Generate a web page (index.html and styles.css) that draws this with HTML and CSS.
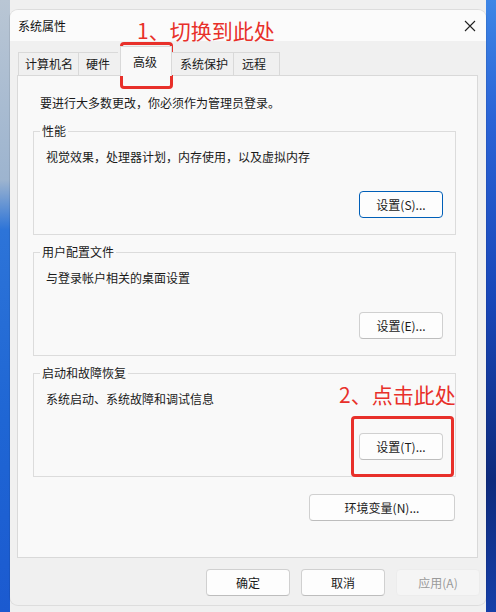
FILE: index.html
```html
<!DOCTYPE html>
<html lang="zh-CN">
<head>
<meta charset="utf-8">
<title>系统属性</title>
<link rel="stylesheet" href="styles.css">
</head>
<body>
<div class="window">
  <div class="titlebar">
    <span class="title">系统属性</span>
    <span class="close">
      <svg width="12" height="12" viewBox="0 0 12 12"><path d="M1 1L11 11M11 1L1 11" stroke="#222" stroke-width="1.1" fill="none"/></svg>
    </span>
  </div>
  <div class="tabs">
    <div class="tab t1">计算机名</div>
    <div class="tab t2">硬件</div>
    <div class="tab t3 active">高级</div>
    <div class="tab t4">系统保护</div>
    <div class="tab t5">远程</div>
  </div>
  <div class="panel">
    <p class="intro">要进行大多数更改，你必须作为管理员登录。</p>
    <div class="group">
      <span class="label">性能</span>
      <p class="desc">视觉效果，处理器计划，内存使用，以及虚拟内存</p>
      <div class="row"><button class="btn default">设置(S)...</button></div>
    </div>
    <div class="group">
      <span class="label">用户配置文件</span>
      <p class="desc">与登录帐户相关的桌面设置</p>
      <div class="row"><button class="btn">设置(E)...</button></div>
    </div>
    <div class="group">
      <span class="label">启动和故障恢复</span>
      <p class="desc">系统启动、系统故障和调试信息</p>
      <div class="row"><button class="btn">设置(T)...</button></div>
    </div>
    <div class="env-row"><button class="btn env">环境变量(N)...</button></div>
  </div>
  <div class="footer">
    <button class="btn foot">确定</button>
    <button class="btn foot">取消</button>
    <button class="btn foot disabled">应用(A)</button>
  </div>
</div>
<div class="note note1">1、切换到此处</div>
<div class="mark mark1"></div>
<div class="note note2">2、点击此处</div>
<div class="mark mark2"></div>
</body>
</html>
```
FILE: styles.css
```css
html, body {
  margin: 0;
  padding: 0;
}
body {
  width: 496px;
  height: 612px;
  overflow: hidden;
  position: relative;
  font-family: "Noto Sans CJK SC", "Noto Sans", sans-serif;
  font-size: 12px;
  color: #1a1a1a;
  background:
    linear-gradient(90deg, transparent 10px, #f0f0f0 10px, #f0f0f0 486px, transparent 486px),
    linear-gradient(180deg, #b9c6d4 0px, #9db4cf 180px, #2d74d8 230px, #1f66d4 420px, #1b5ad0 612px);
}
.window {
  position: absolute;
  left: 10px;
  top: 10px;
  width: 476px;
  height: 595px;
  border-radius: 8px;
  background: #f0f0f0;
  overflow: hidden;
  box-shadow: 0 0 0 1px rgba(0,0,0,0.08);
  display: flex;
  flex-direction: column;
}
body::after {
  content: "";
  position: absolute;
  right: 0;
  top: 0;
  width: 10px;
  height: 612px;
  background: linear-gradient(180deg, #3e86e6 0px, #2a63d6 120px, #1846b8 300px, #0d2a7c 480px, #163fa8 612px);
  z-index: -1;
}
.titlebar {
  height: 31px;
  background: #fbfbfb;
  display: flex;
  align-items: center;
  justify-content: space-between;
  padding: 0 9px 0 8px;
  flex: none;
}
.title {
  font-size: 12px;
  color: #111;
}
.close {
  width: 12px;
  height: 12px;
  display: flex;
  margin-right: 1px;
}
.tabs {
  display: flex;
  align-items: flex-end;
  margin: 0 0 0 8px;
  height: 34px;
  position: relative;
  z-index: 2;
  flex: none;
}
.tab {
  height: 23px;
  line-height: 22px;
  border: 1px solid #d9d9d9;
  border-bottom: none;
  border-right: none;
  background: #f0f0f0;
  font-size: 12px;
  color: #1a1a1a;
  box-sizing: border-box;
  white-space: nowrap;
}
.t1 { width: 60px; padding-left: 6px; }
.t2 { width: 40px; padding-left: 7px; }
.t3 { width: 52px; padding-left: 12px; margin-left: 2px; }
.t4 { width: 61px; padding-left: 8px; border-left: none; }
.t5 { width: 47px; padding-left: 8px; border-right: 1px solid #d9d9d9; }
.tab.active {
  height: 30px;
  line-height: 29px;
  margin-bottom: -1px;
  background: #f9f9f9;
  border-right: 1px solid #d9d9d9;
}
.panel {
  margin: 0 8px 0 7px;
  height: 483px;
  border: 1px solid #d9d9d9;
  background: #f9f9f9;
  padding: 0 21px 0 15px;
  box-sizing: border-box;
  flex: none;
}
.intro {
  margin: 20px 0 0 7px;
  line-height: 14px;
  font-size: 12px;
}
.group {
  margin: 21px 0 0 0;
  border: 1px solid #dcdcdc;
  height: 104px;
  box-sizing: border-box;
  padding: 0 12px 0 12px;
  line-height: 16px;
}
.group + .group { margin-top: 17px; }
.label {
  display: block;
  width: max-content;
  margin: -8px 0 0 -6px;
  padding: 0 2px;
  line-height: 14px;
  height: 14px;
  background: #f9f9f9;
}
.desc {
  margin: 11px 0 0 0;
  line-height: 16px;
}
.row {
  display: flex;
  justify-content: flex-end;
  margin-top: 26px;
}
.btn {
  font-family: "Noto Sans CJK SC", "Noto Sans", sans-serif;
  font-size: 12px;
  color: #1a1a1a;
  background: #fdfdfd;
  border: 1px solid #d0d0d0;
  border-bottom-color: #bdbdbd;
  border-radius: 4px;
  height: 27px;
  padding: 0;
  width: 84px;
  box-sizing: border-box;
}
.btn.default {
  border: 1px solid #005fb8;
}
.env-row {
  display: flex;
  justify-content: flex-end;
  margin-top: 17px;
}
.btn.env {
  width: 146px;
  margin-right: 1px;
}
.footer {
  display: flex;
  justify-content: flex-end;
  gap: 11px;
  padding: 11px 6px 0 0;
}
.btn.foot {
  width: 84px;
  height: 27px;
}
.btn.disabled {
  color: #9a9a9a;
  background: #f5f5f5;
  border-color: #ececec;
}
.note {
  position: absolute;
  color: #e8302a;
  font-size: 21px;
  line-height: 24px;
  font-family: "Noto Sans CJK SC", "Noto Sans", sans-serif;
  white-space: nowrap;
}
.note1 { left: 137px; top: 18px; }
.note2 { left: 339px; top: 382px; }
.mark {
  position: absolute;
  border: 3px solid #e8302a;
  border-radius: 4px;
  box-sizing: border-box;
}
.mark1 { left: 120px; top: 42px; width: 53px; height: 47px; }
.mark2 { left: 351px; top: 416px; width: 103px; height: 61px; }
```
